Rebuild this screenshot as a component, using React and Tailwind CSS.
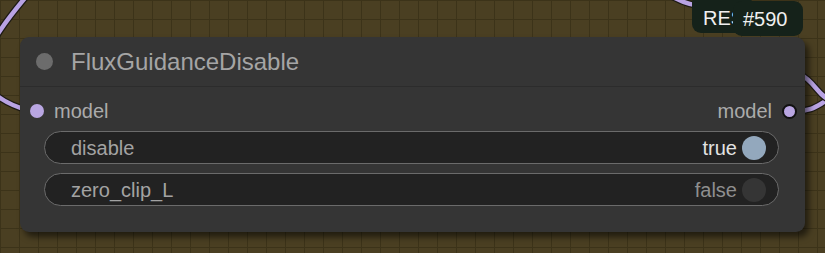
import React from 'react'

const font = { fontFamily: '"Liberation Sans", Arial, sans-serif' }

function Toggle({ label, value, on }) {
    return (
        <div className="flex items-center h-[33px] rounded-full border border-[#6b6b6b] bg-[#222222] pl-[26px] pr-[12px]">
            <span className="text-[20px] text-[#a3a3a3] leading-none">{label}</span>
            <span className={`ml-auto text-[20px] leading-none ${on ? 'text-[#e2e2e2]' : 'text-[#8f8f8f]'}`}>{value}</span>
            <span className={`ml-[5px] w-[24px] h-[24px] rounded-full ${on ? 'bg-[#93a8bd]' : 'bg-[#353535]'}`} />
        </div>
    )
}

const wires = [
    'M 30 -8 C -15 45, -45 90, 30 111',
    'M 668 -6 Q 690 8 712 6',
    'M 796 111 C 815 111, 818 104, 832 98',
    'M 800 74 C 815 82, 818 96, 832 101',
]

export default function App() {
    return (
        <div
            className="relative w-[825px] h-[253px] overflow-hidden bg-[#4a3f22] bg-[linear-gradient(to_right,#3c3319_1px,transparent_1px),linear-gradient(to_bottom,#3c3319_1px,transparent_1px)] bg-[size:19px_19px]"
            style={font}
        >
            {/* wires */}
            <svg className="absolute inset-0" width="825" height="253">
                <g fill="none" strokeLinecap="round">
                    {wires.map((d, i) => (
                        <g key={i}>
                            <path d={d} stroke="#1d1a14" strokeWidth="7" />
                            <path d={d} stroke="#b9a3e3" strokeWidth="4.5" />
                        </g>
                    ))}
                </g>
            </svg>

            {/* node */}
            <div className="relative pt-[37px] pl-[20px]">
                <div className="w-[785px] h-[195px] rounded-[9px] bg-[#353535] shadow-[4px_5px_6px_rgba(0,0,0,0.55)]">
                    <div className="flex items-center h-[50px] border-b border-[#2c2c2c] pl-[16px]">
                        <span className="w-[17px] h-[17px] rounded-full bg-[#6c6c6c]" />
                        <span className="ml-[18px] text-[24px] text-[#a5a5a5] leading-none">FluxGuidanceDisable</span>
                    </div>

                    <div className="flex items-center h-[24px] mt-[12px] pl-[10px] pr-[8px]">
                        <span className="w-[14px] h-[14px] rounded-full bg-[#b9a6e2]" />
                        <span className="ml-[10px] text-[20px] text-[#ababab] leading-none">model</span>
                        <span className="ml-auto text-[20px] text-[#ababab] leading-none">model</span>
                        <span className="ml-[10px] w-[15px] h-[15px] rounded-full bg-[#b9a6e2] border-2 border-[#111111]" />
                    </div>

                    <div className="flex flex-col gap-[9px] mt-[8px] pl-[24px] pr-[26px]">
                        <Toggle label="disable" value="true" on />
                        <Toggle label="zero_clip_L" value="false" />
                    </div>
                </div>
            </div>

            {/* badges */}
            <div className="absolute left-[692px] top-[-6px] w-[60px] h-[39px] rounded-[9px] bg-[#15221a] pl-[11px] pt-[14px] overflow-hidden">
                <span className="text-[20px] text-[#f0f0f0] leading-none whitespace-nowrap">RES</span>
            </div>
            <div className="absolute left-[733px] top-[1px] w-[70px] h-[35px] rounded-[9px] bg-[#15221a] flex items-center pl-[10px]">
                <span className="text-[20px] text-[#f0f0f0] leading-none">#590</span>
            </div>
        </div>
    )
}
